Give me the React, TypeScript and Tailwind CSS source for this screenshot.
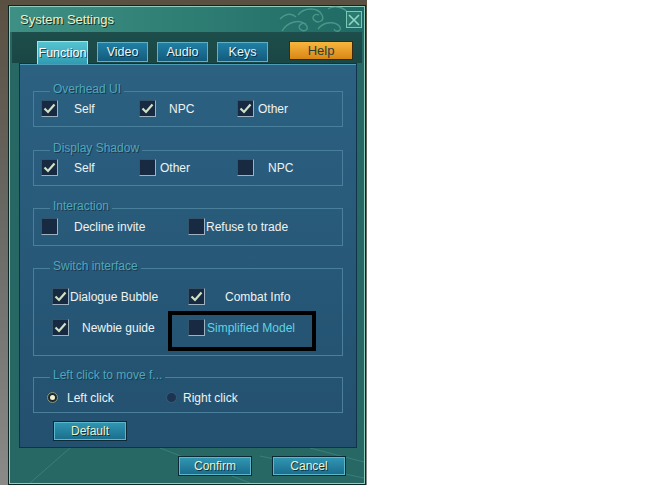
import React from "react"

function Check({ on }: { on: boolean }) {
  return (
    <span className="flex h-[17px] w-[17px] shrink-0 items-center justify-center border border-l-[#34546b] border-t-[#34546b] border-b-[#9db3c2] border-r-[#9db3c2] bg-[#182a42]">
      {on && (
        <svg width="13" height="11" viewBox="0 0 13 11">
          <path d="M1.5 5.5 L5 9 L11.5 1.5" fill="none" stroke="#cfe2c4" strokeWidth="2.2" />
        </svg>
      )}
    </span>
  )
}

function Radio({ on }: { on: boolean }) {
  return (
    <span
      className={
        on
          ? "flex h-[11px] w-[11px] shrink-0 items-center justify-center rounded-full border border-[#8a9a80] bg-[#1b2a30]"
          : "flex h-[11px] w-[11px] shrink-0 items-center justify-center rounded-full border border-[#355d7c] bg-[#1c3450]"
      }
    >
      {on && <span className="h-[5px] w-[5px] rounded-full bg-[#f2f2d2]" />}
    </span>
  )
}

interface OptionProps {
  on: boolean
  label: string
  width?: string
  gap: string
  cyan?: boolean
}

function Option({ on, label, width = "", gap, cyan }: OptionProps) {
  return (
    <div className={"flex h-[17px] items-center " + width}>
      <Check on={on} />
      <span className={gap + (cyan ? " text-[#5fd3e2]" : " text-[#eef3f2]")}>{label}</span>
    </div>
  )
}

function Group({ title, className, children }: { title: string; className: string; children: React.ReactNode }) {
  return (
    <fieldset className={"min-w-0 border border-[#4a7f9b] " + className}>
      <legend className="relative -top-[2px] ml-[16px] px-[3px] text-[12px] leading-[14px] text-[#4fa7bc] [text-shadow:1px_1px_0_#1a3a50]">
        {title}
      </legend>
      {children}
    </fieldset>
  )
}

const BUTTON =
  "flex h-[20px] w-[74px] items-center justify-center border border-[#0b2a36] bg-gradient-to-b from-[#3198b4] to-[#1a6c8c] text-[12px] text-[#eef2c8] shadow-[inset_0_0_0_1px_#5bb8cc] [text-shadow:1px_1px_0_#0d3040]"

const TAB =
  "mb-[1px] ml-[9px] flex h-[20px] w-[51px] items-center justify-center border border-[#5fb0c8] bg-gradient-to-b from-[#2080a6] to-[#145b7d] text-[12.5px] text-[#eaf5f8] [text-shadow:1px_1px_0_#0b3040]"

export default function App() {
  return (
    <div className="flex h-[487px] w-[658px] items-start bg-white font-['Liberation_Sans',Arial,sans-serif]">
      <div className="h-[485px] w-[367px] bg-gradient-to-b from-[#5a5042] via-[#6b6b68] to-[#8a8a88] pl-[8px] pr-[1px] pt-[5px]">
        <div className="h-[480px] border border-[#0c2624]">
          <div className="flex h-full flex-col border border-[#8ccfc0] bg-[#286864]">
            {/* title bar */}
            <div className="relative flex h-[25px] shrink-0 items-center bg-gradient-to-r from-[#3f9084] via-[#2f7e74] to-[#1f6a64] pl-[10px] pr-[2px]">
              <svg className="absolute left-[268px] top-[-2px]" width="72" height="28" viewBox="0 0 72 28" fill="none" stroke="#5aa898" strokeWidth="1.4" opacity="0.7">
                <path d="M4 26 C10 16 22 14 28 20 C32 24 26 28 22 24 C19 21 24 17 28 19" />
                <path d="M20 10 C26 2 40 2 44 10 C47 16 40 19 36 15 C33 12 37 8 41 10" />
                <path d="M40 24 C46 16 58 16 62 22 C64 26 58 28 56 24" />
                <path d="M50 4 C56 0 66 2 70 8" />
                <path d="M2 14 C8 8 14 8 18 12" />
              </svg>
              <span className="relative text-[13px] text-[#f4f0c4] [text-shadow:1px_1px_0_#10302c]">System Settings</span>
              <div className="relative ml-auto flex h-[17px] w-[16px] items-center justify-center border border-[#7cc8b8] bg-[#2a7a70]">
                <svg width="12" height="12" viewBox="0 0 12 12" stroke="#8fd6c6" strokeWidth="1.6">
                  <path d="M1 1 L11 11 M11 1 L1 11" />
                </svg>
              </div>
            </div>

            {/* tab strip */}
            <div className="mx-[2px] flex h-[31px] shrink-0 items-end bg-gradient-to-b from-[#1d4e4b] to-[#1a4644] pl-[25px]">
              <div className="relative z-10 -mb-px flex h-[23px] w-[51px] items-center justify-center border border-b-0 border-[#a6e2ea] bg-gradient-to-b from-[#56c3d1] to-[#2f9cb2] text-[12.5px] text-white [text-shadow:1px_1px_0_#0e4a58]">
                Function
              </div>
              <div className={TAB}>Video</div>
              <div className={TAB}>Audio</div>
              <div className={TAB}>Keys</div>
              <div className="mb-[3px] ml-[21px] flex h-[19px] w-[64px] items-center justify-center border border-[#3b2a0c] bg-gradient-to-b from-[#f8b63c] to-[#d98712] text-[13px] text-[#27403c]">
                Help
              </div>
            </div>

            {/* panel */}
            <div className="ml-[9px] flex h-[385px] w-[338px] shrink-0 flex-col border border-[#10324a] bg-gradient-to-b from-[#2c6182] to-[#23506e] px-[13px] pt-[20px] text-[12px] shadow-[inset_0_1px_0_#4d9db8]">
              <Group title="Overhead UI" className="pb-[9px]">
                <div className="mt-[2px] flex pl-[7px]">
                  <Option on label="Self" width="w-[98px]" gap="ml-[16px]" />
                  <Option on label="NPC" width="w-[98px]" gap="ml-[13px]" />
                  <Option on label="Other" gap="ml-[4px]" />
                </div>
              </Group>

              <Group title="Display Shadow" className="mt-[16px] pb-[9px]">
                <div className="mt-[2px] flex pl-[7px]">
                  <Option on label="Self" width="w-[98px]" gap="ml-[16px]" />
                  <Option on={false} label="Other" width="w-[98px]" gap="ml-[4px]" />
                  <Option on={false} label="NPC" gap="ml-[14px]" />
                </div>
              </Group>

              <Group title="Interaction" className="mt-[15px] pb-[10px]">
                <div className="mt-[3px] flex pl-[7px]">
                  <Option on={false} label="Decline invite" width="w-[147px]" gap="ml-[16px]" />
                  <Option on={false} label="Refuse to trade" gap="ml-[1px]" />
                </div>
              </Group>

              <Group title="Switch interface" className="mt-[15px] pb-[19px]">
                <div className="mt-[13px] flex pl-[18px]">
                  <Option on label="Dialogue Bubble" width="w-[136px]" gap="ml-[1px]" />
                  <Option on label="Combat Info" gap="ml-[20px]" />
                </div>
                <div className="mt-[14px] flex pl-[18px]">
                  <Option on label="Newbie guide" width="w-[136px]" gap="ml-[13px]" />
                  <div className="relative">
                    <Option on={false} label="Simplified Model" gap="ml-[2px]" cyan />
                    <div className="absolute -left-[20px] -top-[8px] h-[40px] w-[148px] border-[4px] border-black" />
                  </div>
                </div>
              </Group>

              <Group title="Left click to move f..." className="mt-[14px] pb-[6px]">
                <div className="mt-[5px] flex h-[17px] items-center pl-[13px]">
                  <div className="flex w-[119px] items-center">
                    <Radio on />
                    <span className="ml-[9px] text-[#eef3f2]">Left click</span>
                  </div>
                  <div className="flex items-center">
                    <Radio on={false} />
                    <span className="ml-[6px] text-[#eef3f2]">Right click</span>
                  </div>
                </div>
              </Group>

              <div className="ml-[20px] mt-[8px]">
                <div className={BUTTON}>Default</div>
              </div>
            </div>

            {/* footer */}
            <div className="relative flex flex-1 gap-[20px] pl-[168px] pt-[8px]">
              <svg className="absolute left-0 top-0" width="354" height="35" viewBox="0 0 354 35" fill="none" stroke="#3c8580" strokeWidth="1" opacity="0.8">
                <path d="M60 0 L20 35" />
                <path d="M150 0 L240 35" />
                <path d="M250 8 L354 30" />
                <path d="M300 0 L354 14" />
              </svg>
              <div className={"relative " + BUTTON}>Confirm</div>
              <div className={"relative " + BUTTON}>Cancel</div>
            </div>
          </div>
        </div>
      </div>
    </div>
  )
}
